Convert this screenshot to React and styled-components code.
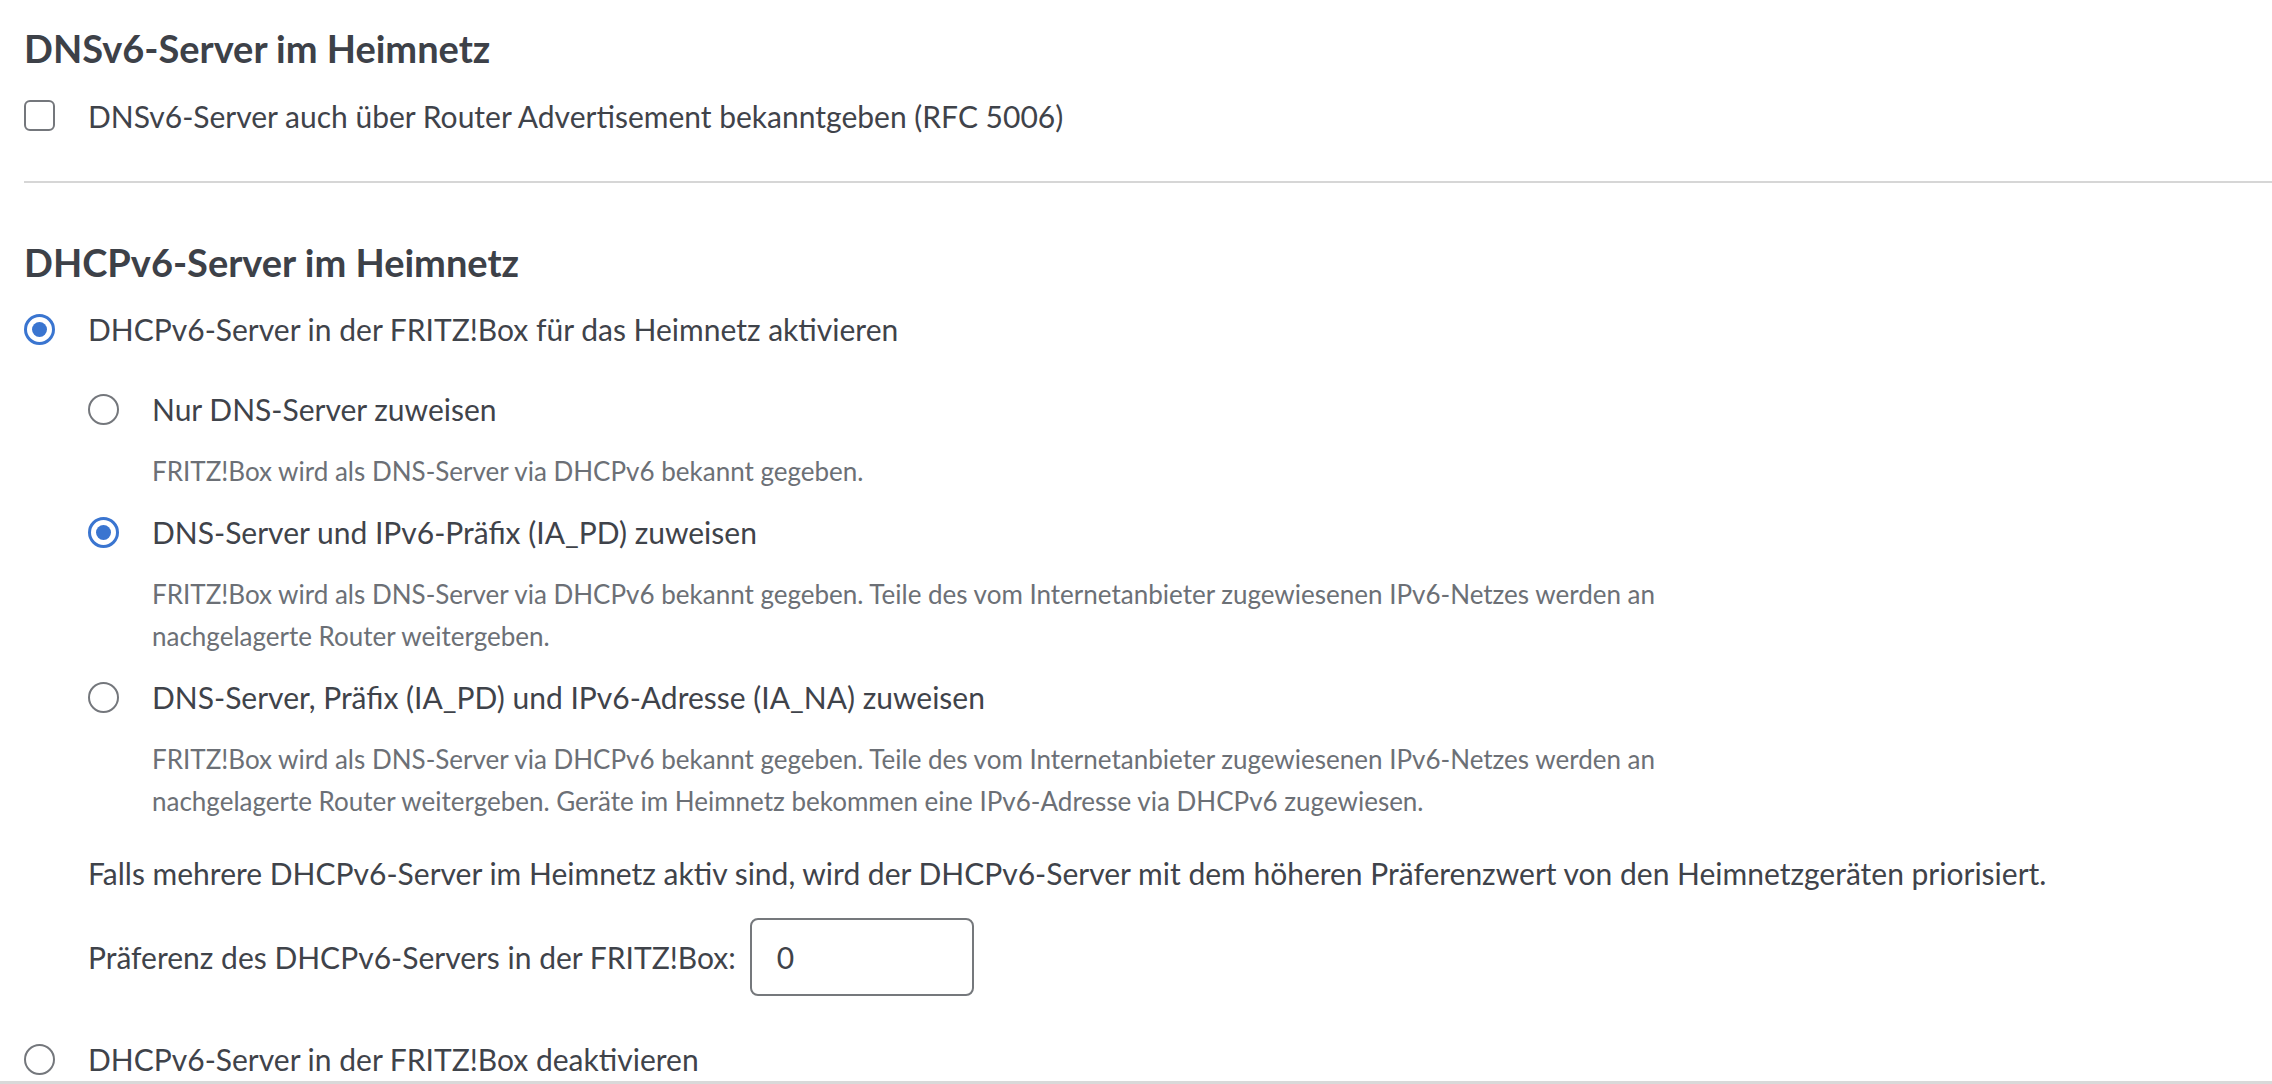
import React, { useState } from 'react'
import styled, { createGlobalStyle } from 'styled-components'

const GlobalStyle = createGlobalStyle`
  html, body {
    margin: 0;
    padding: 0;
    background: #fff;
    overflow: hidden;
  }
  body {
    font-family: Lato, "Open Sans", sans-serif;
    color: #3f434a;
  }
`

const Page = styled.div`
  display: flex;
  flex-direction: column;
  height: 1084px;
  box-sizing: border-box;
  padding: 24px 0 0 24px;
`

const Heading = styled.h2`
  margin: ${p => p.$top || 0}px 0 0;
  font-size: 38px;
  line-height: 48px;
  font-weight: 700;
  color: #3d4148;
`

const Choice = styled.label`
  display: flex;
  align-items: center;
  gap: 33px;
  height: 44px;
  margin-top: ${p => p.$top || 0}px;
  font-size: 30px;
  color: #3f434a;
  cursor: pointer;
`

const Box = styled.span`
  flex: none;
  width: 31px;
  height: 31px;
  box-sizing: border-box;
  border: 2px solid #74777c;
  border-radius: 6px;
  background: #fff;
`

const Radio = styled.span`
  flex: none;
  width: 31px;
  height: 31px;
  box-sizing: border-box;
  border-radius: 50%;
  border: ${p => (p.$on ? '3px solid #3a75d0' : '2px solid #74777c')};
  display: flex;
  align-items: center;
  justify-content: center;

  &::after {
    content: '';
    display: ${p => (p.$on ? 'block' : 'none')};
    width: 15px;
    height: 15px;
    border-radius: 50%;
    background: #3a75d0;
  }
`

const Divider = styled.hr`
  margin: 43px 0 0;
  border: none;
  height: 2px;
  background: #d6d6d6;
`

// options nested under the active DHCPv6 server choice
const SubList = styled.div`
  display: flex;
  flex-direction: column;
  padding-left: 64px;
  margin-top: 36px;
`

const Hint = styled.p`
  margin: 19px 0 0;
  padding-left: 64px;
  max-width: 1560px;
  font-size: 26px;
  line-height: 42px;
  color: #6c7076;
`

const Note = styled.p`
  margin: 29px 0 0;
  font-size: 30px;
  line-height: 44px;
  color: #3f434a;
`

const PrefRow = styled.div`
  display: flex;
  align-items: center;
  gap: 14px;
  margin-top: 23px;
  font-size: 30px;
  color: #3f434a;
`

const NumberInput = styled.input`
  width: 224px;
  height: 78px;
  box-sizing: border-box;
  padding: 0 25px;
  border: 2px solid #75787c;
  border-radius: 8px;
  font-family: inherit;
  font-size: 30px;
  color: #3f434a;
  outline: none;
`

const Footer = styled.div`
  margin: auto 0 0 -24px;
  height: 3px;
  background: #d9d9d9;
`

const modes = [
  {
    id: 'dns',
    label: 'Nur DNS-Server zuweisen',
    hint: 'FRITZ!Box wird als DNS-Server via DHCPv6 bekannt gegeben.',
  },
  {
    id: 'pd',
    label: 'DNS-Server und IPv6-Präfix (IA_PD) zuweisen',
    hint: 'FRITZ!Box wird als DNS-Server via DHCPv6 bekannt gegeben. Teile des vom Internetanbieter zugewiesenen IPv6-Netzes werden an nachgelagerte Router weitergeben.',
  },
  {
    id: 'na',
    label: 'DNS-Server, Präfix (IA_PD) und IPv6-Adresse (IA_NA) zuweisen',
    hint: 'FRITZ!Box wird als DNS-Server via DHCPv6 bekannt gegeben. Teile des vom Internetanbieter zugewiesenen IPv6-Netzes werden an nachgelagerte Router weitergeben. Geräte im Heimnetz bekommen eine IPv6-Adresse via DHCPv6 zugewiesen.',
  },
]

export default function App() {
  const [announce, setAnnounce] = useState(false)
  const [server, setServer] = useState(true)
  const [mode, setMode] = useState('pd')
  const [pref, setPref] = useState('0')

  return (
    <Page>
      <GlobalStyle />

      <Heading>DNSv6-Server im Heimnetz</Heading>
      <Choice $top={22} onClick={() => setAnnounce(!announce)}>
        <Box />
        DNSv6-Server auch über Router Advertisement bekanntgeben (RFC 5006)
      </Choice>

      <Divider />

      <Heading $top={55}>DHCPv6-Server im Heimnetz</Heading>
      <Choice $top={22} onClick={() => setServer(true)}>
        <Radio $on={server} />
        DHCPv6-Server in der FRITZ!Box für das Heimnetz aktivieren
      </Choice>

      <SubList>
        {modes.map((m, i) => (
          <React.Fragment key={m.id}>
            <Choice $top={i ? 18 : 0} onClick={() => setMode(m.id)}>
              <Radio $on={mode === m.id} />
              {m.label}
            </Choice>
            <Hint>{m.hint}</Hint>
          </React.Fragment>
        ))}
        <Note>
          Falls mehrere DHCPv6-Server im Heimnetz aktiv sind, wird der DHCPv6-Server mit dem höheren Präferenzwert von den Heimnetzgeräten priorisiert.
        </Note>
        <PrefRow>
          Präferenz des DHCPv6-Servers in der FRITZ!Box:
          <NumberInput value={pref} onChange={e => setPref(e.target.value)} />
        </PrefRow>
      </SubList>

      <Choice $top={41} onClick={() => setServer(false)}>
        <Radio $on={!server} />
        DHCPv6-Server in der FRITZ!Box deaktivieren
      </Choice>

      <Footer />
    </Page>
  )
}
